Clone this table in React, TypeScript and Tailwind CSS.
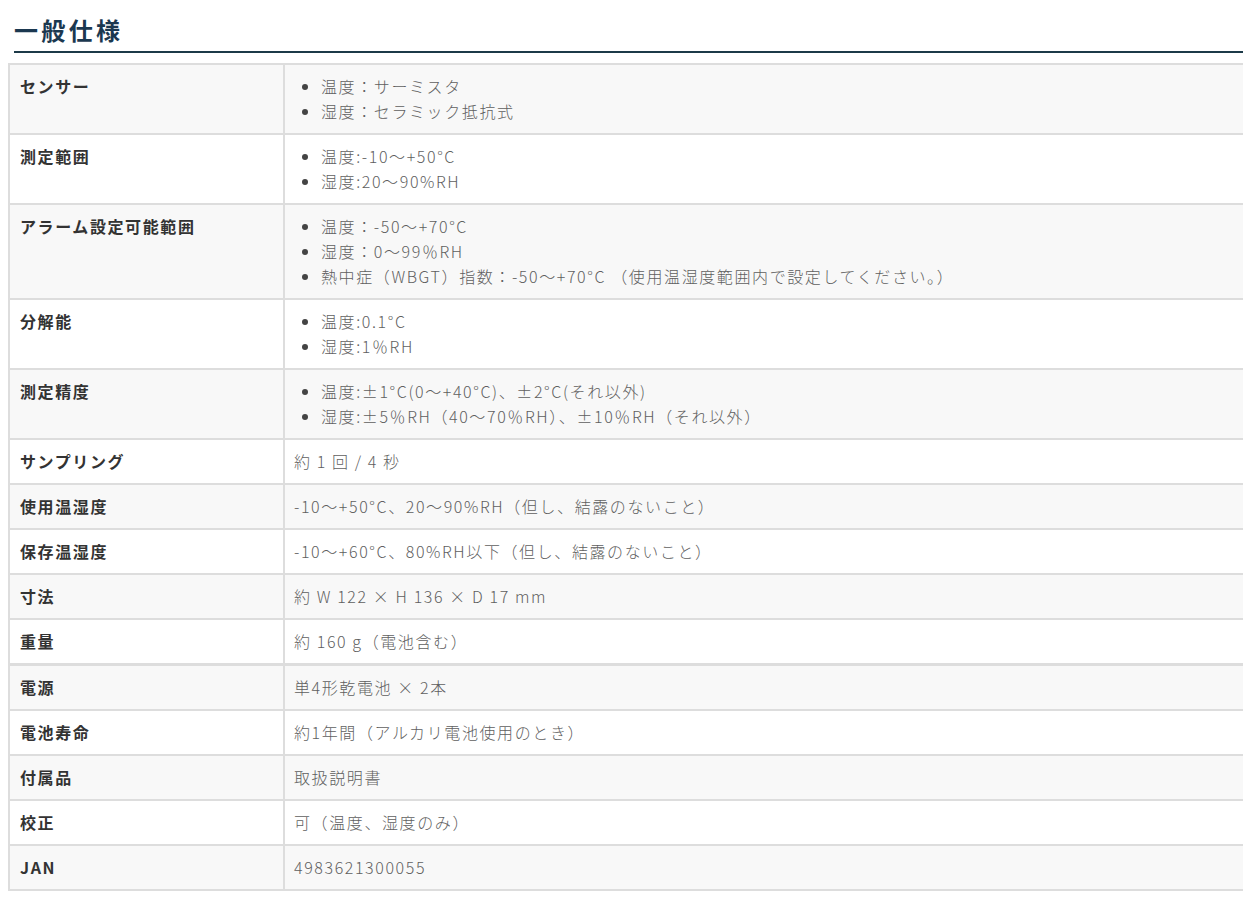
const font = { fontFamily: '"Noto Sans CJK JP", "Noto Sans", sans-serif' };

type Spec = { label: string; items?: string[]; text?: string };

const specs: Spec[] = [
  { label: "センサー", items: ["温度：サーミスタ", "湿度：セラミック抵抗式"] },
  { label: "測定範囲", items: ["温度:-10〜+50°C", "湿度:20〜90%RH"] },
  {
    label: "アラーム設定可能範囲",
    items: [
      "温度：-50〜+70°C",
      "湿度：0〜99％RH",
      "熱中症（WBGT）指数：-50〜+70°C （使用温湿度範囲内で設定してください。）",
    ],
  },
  { label: "分解能", items: ["温度:0.1°C", "湿度:1％RH"] },
  {
    label: "測定精度",
    items: ["温度:±1°C(0〜+40°C)、±2°C(それ以外)", "湿度:±5％RH（40〜70％RH）、±10％RH（それ以外）"],
  },
  { label: "サンプリング", text: "約 1 回 / 4 秒" },
  { label: "使用温湿度", text: "-10〜+50°C、20〜90%RH（但し、結露のないこと）" },
  { label: "保存温湿度", text: "-10〜+60°C、80%RH以下（但し、結露のないこと）" },
  { label: "寸法", text: "約 W 122 × H 136 × D 17 mm" },
  { label: "重量", text: "約 160 g（電池含む）" },
  { label: "電源", text: "単4形乾電池 × 2本" },
  { label: "電池寿命", text: "約1年間（アルカリ電池使用のとき）" },
  { label: "付属品", text: "取扱説明書" },
  { label: "校正", text: "可（温度、湿度のみ）" },
  { label: "JAN", text: "4983621300055" },
];

export default function App() {
  return (
    <div className="min-h-screen bg-white pt-[16px]" style={font}>
      <div className="pl-[14px]">
        <h2 className="text-[24px] font-bold tracking-[0.14em] leading-[28px] text-[#1b3850] pb-[7px] border-b-[2px] border-[#1c3a48]">
          一般仕様
        </h2>
      </div>
      <div className="pl-[8px] mt-[10px]">
        <table className="w-full border-collapse text-[16px] tracking-[0.1em]">
          <tbody>
            {specs.map((s, i) => (
              <tr
                key={s.label}
                className={`${i % 2 === 0 ? "bg-[#f8f8f8]" : "bg-white"} ${
                  i === 9 ? "border-b-[3px]" : "border-b-[2px]"
                } border-t-[2px] border-[#dddddd]`}
              >
                <td className="w-[275px] align-top border-l-[2px] border-r-[2px] border-[#dddddd] pl-[10px] pr-[10px] py-[9px] leading-[25px] font-bold text-[#333333]">
                  {s.label}
                </td>
                <td className="align-top pl-[9px] pr-[10px] py-[9px] leading-[25px] font-light text-[#5f5f5f]">
                  {s.items ? (
                    <ul className="list-disc pl-[27px] marker:text-[#444444]">
                      {s.items.map((it) => (
                        <li key={it}>{it}</li>
                      ))}
                    </ul>
                  ) : (
                    s.text
                  )}
                </td>
              </tr>
            ))}
          </tbody>
        </table>
      </div>
    </div>
  );
}
